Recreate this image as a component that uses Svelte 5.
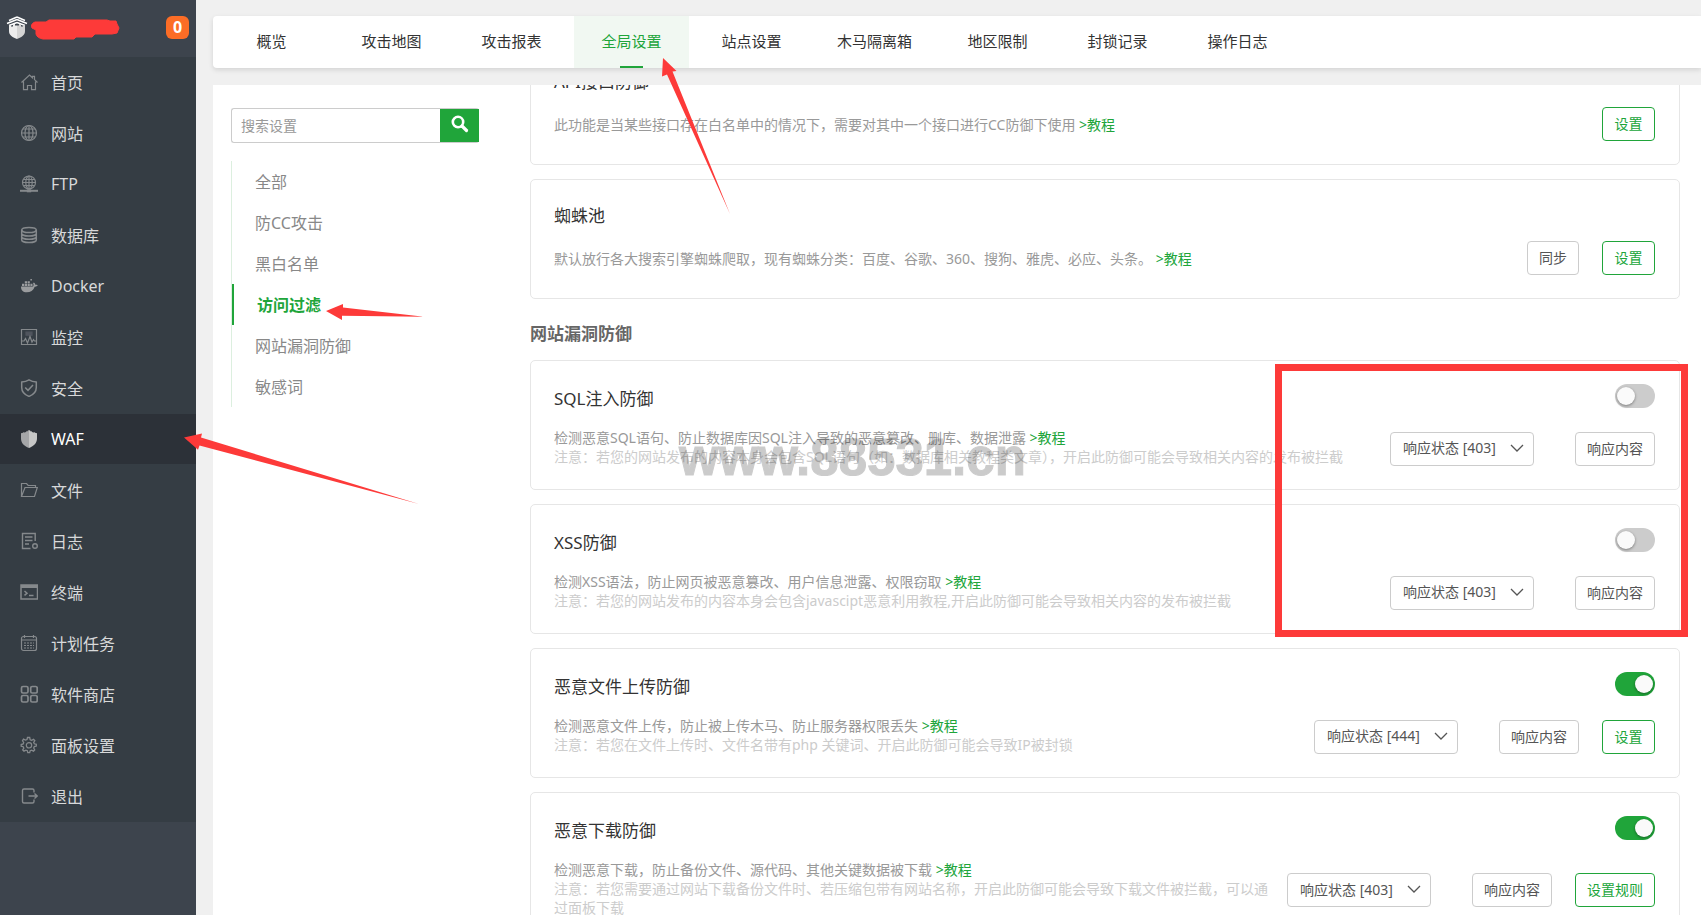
<script>
	// inner shapes of the 18x18 sidebar icons
	const menus = [
		{
			name: '首页',
			icon: '<path d="M1.5 9.5 9.5 2l3 2.8V3.3h2v3.3l3 2.9M3.5 8.5v8.2h4v-4.2h4v4.2h4V8.5"/>'
		},
		{
			name: '网站',
			icon: '<circle cx="9" cy="9" r="7.5"/><path d="M9 1.5v15M1.5 9h15M2.8 5h12.4M2.8 13h12.4"/><ellipse cx="9" cy="9" rx="4" ry="7.5"/>'
		},
		{
			name: 'FTP',
			icon: '<circle cx="9" cy="7.5" r="6.5"/><path d="M9 1v13M2.5 7.5h13M3.5 4.5h11M3.5 10.7h11"/><ellipse cx="9" cy="7.5" rx="3.2" ry="6.5"/><path d="M0 15.8h18" stroke-width="2"/><path d="M6.8 15.8h4.4" stroke-width="3"/>'
		},
		{
			name: '数据库',
			icon: '<g stroke-width="1.5"><ellipse cx="9" cy="4" rx="7.3" ry="2.6"/><path d="M1.7 4v10c0 1.4 3.3 2.6 7.3 2.6s7.3-1.2 7.3-2.6V4M1.7 7.4C1.7 8.8 5 10 9 10s7.3-1.2 7.3-2.6M1.7 10.7c0 1.4 3.3 2.6 7.3 2.6s7.3-1.2 7.3-2.6"/></g>'
		},
		{
			name: 'Docker',
			icon: '<path fill="#9a9c9e" stroke="none" d="M1 9.5h12c.7-.7.7-2.4 0-3.2l.9-.8c.9.6 1.4 1.4 1.4 2.3.9-.1 1.900 0 2.400.500-.600 1.100-1.700 1.500-3 1.400-1.400 3.600-4.100 5.600-8 5.600C3 15.300.900 13.300 1 9.500zM2 6.700h2.200v2.200H2zM4.800 6.700H7v2.200H4.800zM7.600 6.700h2.200v2.200H7.600zM10.400 6.700h2.100v2.200h-2.100zM7.600 4.200h2.200v2H7.600zM4.800 4.200H7v2H4.800zM10.400 2h1.500v1.500h-1.500z"/>'
		},
		{
			name: '监控',
			icon: '<path d="M1.5 1.5h15v15h-15z"/><path d="M6 4.2h6v3H6z" fill="#50555e" stroke="#50555e"/><path d="M2 13h2l1.5-2.5L7.5 15 10 8.5l2 5.500 1.500-2.500L14.500 13H16"/>'
		},
		{
			name: '安全',
			icon: '<path stroke-width="1.5" d="M9 .9c2.3 1.4 4.6 2 7.3 2.2v5.400c0 4.200-2.600 7.100-7.300 8.900-4.700-1.800-7.300-4.700-7.300-8.900V3.100C4.400 2.900 6.700 2.300 9 .900zM5.200 8.500 8 11.300l5-5.300"/>'
		},
		{
			name: 'WAF',
			active: true,
			icon: '<g stroke="none"><path fill="#a5a6a8" d="M9 0v18c-5-2-8-5-8-9.500V3.200l2-.4v-.6l1.400.2v.2l1.700-.5v-.8l1.300.2V1z"/><path fill="#c6c6c6" d="M9 0v18c5-2 8-5 8-9.500V3.200l-2-.4v-.6l-1.400.2v.2l-1.700-.5v-.8l-1.300.2V1z"/></g>'
		},
		{
			name: '文件',
			icon: '<path d="M1.5 15.5v-13h5l1.700 2h7.300v2M1.500 15.500h13L17.300 6.500H5z"/>'
		},
		{
			name: '日志',
			icon: '<path stroke-width="1.4" d="M15.200 9V1.500H2.500v15h8M5 5h7.500M5 8.500h7.500M5 12h4"/><circle stroke-width="1.4" cx="15" cy="14" r="2.3"/>'
		},
		{
			name: '终端',
			icon: '<path stroke-width="1.5" d="M1 2h16.500v14H1z"/><path d="M1 3.500h16.500" stroke-width="3"/><path stroke-width="1.5" d="M4.500 8 7 10.200l-2.500 2.200M9 12.500h4.500"/>'
		},
		{
			name: '计划任务',
			icon: '<rect x="1.5" y="2.5" width="15" height="14" rx="2"/><path d="M1.500 6h15M4.500 1v3M13.500 1v3"/><path d="M4 9h10M4 11.500h10M4 14h10" stroke-dasharray="2 1"/>'
		},
		{
			name: '软件商店',
			icon: '<g stroke-width="1.7"><rect x="1.5" y="1.5" width="6.5" height="6.5" rx="1.5"/><rect x="10.7" y="1.5" width="6.5" height="6.5" rx="1.5"/><rect x="1.5" y="10.500" width="6.5" height="6.5" rx="1.5"/><rect x="10.7" y="10.500" width="6.5" height="6.5" rx="1.5"/></g>'
		},
		{
			name: '面板设置',
			icon: '<path stroke-width="1.3" d="m7.500 1.500-.5 2-1.500.6-2-.9-1 1.600L3.700 6.500 3.200 8l-2 .5v1.700l2 .5.6 1.400-1.100 1.800 1.300 1.200 1.900-1 1.400.6.5 1.900h1.900l.5-1.900 1.400-.6 1.900 1 1.200-1.300-1-1.800.6-1.400 2-.5V8.300l-2-.5-.6-1.300 1.100-1.800-1.300-1.300-1.900 1-1.400-.6-.5-2.300z"/><circle cx="9" cy="9.3" r="2.7"/>'
		},
		{
			name: '退出',
			icon: '<path stroke-width="1.4" d="M14 5.500v-2q0-1.500-1.500-1.500H4Q2.500 2 2.500 3.500v11Q2.500 16 4 16h8.500q1.500 0 1.500-1.500v-2M8.500 9H17M14.500 6.500 17.300 9l-2.800 2.500"/>'
		}
	];

	const tabs = ['概览', '攻击地图', '攻击报表', '全局设置', '站点设置', '木马隔离箱', '地区限制', '封锁记录', '操作日志'];
	const categories = ['全部', '防CC攻击', '黑白名单', '访问过滤', '网站漏洞防御', '敏感词'];

	let activeTab = '全局设置';
	let activeCategory = '访问过滤';
	let keyword = '';

	const accessRules = [
		{
			title: 'API接口防御',
			desc: '此功能是当某些接口存在白名单中的情况下，需要对其中一个接口进行CC防御下使用',
			buttons: [{ text: '设置', primary: true }]
		},
		{
			title: '蜘蛛池',
			desc: '默认放行各大搜索引擎蜘蛛爬取，现有蜘蛛分类：百度、谷歌、360、搜狗、雅虎、必应、头条。',
			buttons: [{ text: '同步' }, { text: '设置', primary: true }]
		}
	];

	let holeRules = [
		{
			title: 'SQL注入防御',
			desc: '检测恶意SQL语句、防止数据库因SQL注入导致的恶意篡改、删库、数据泄露',
			note: '注意：若您的网站发布的内容本身会包含SQL语句（如：数据库相关教程类文章），开启此防御可能会导致相关内容的发布被拦截',
			status: '403',
			open: false,
			buttons: [{ text: '响应内容' }]
		},
		{
			title: 'XSS防御',
			desc: '检测XSS语法，防止网页被恶意篡改、用户信息泄露、权限窃取',
			note: '注意：若您的网站发布的内容本身会包含javascipt恶意利用教程,开启此防御可能会导致相关内容的发布被拦截',
			status: '403',
			open: false,
			buttons: [{ text: '响应内容' }]
		},
		{
			title: '恶意文件上传防御',
			desc: '检测恶意文件上传，防止被上传木马、防止服务器权限丢失',
			note: '注意：若您在文件上传时、文件名带有php 关键词、开启此防御可能会导致IP被封锁',
			status: '444',
			open: true,
			buttons: [{ text: '响应内容' }, { text: '设置', primary: true }]
		},
		{
			title: '恶意下载防御',
			desc: '检测恶意下载，防止备份文件、源代码、其他关键数据被下载',
			note: '注意：若您需要通过网站下载备份文件时、若压缩包带有网站名称，开启此防御可能会导致下载文件被拦截，可以通过面板下载',
			status: '403',
			open: true,
			buttons: [{ text: '响应内容' }, { text: '设置规则', primary: true }]
		}
	];
</script>

<div class="layout">
	<aside class="sidebar">
		<div class="server">
			<svg class="logo" viewBox="0 0 22 24" width="22" height="24" aria-hidden="true">
				<path d="M11 1 3 4.500M11 1l8 3.500M11 3.500 1 7.500M11 3.500l10 4M11 6.500 3 9.500M11 6.500l8 3" fill="none" stroke="#fff" stroke-width="1.4" />
				<path d="M3 9h2v1.500h2V8h2v1.500h2V23c-5-2-8-4-8-8z" fill="#ececec" />
				<path d="M19 9h-2v1.500h-2V8h-2v1.500h-2V23c5-2 8-4 8-8z" fill="#d4d4d4" />
			</svg>
			<svg class="scribble" viewBox="0 0 90 22" width="90" height="22" aria-hidden="true">
				<path d="M4 3h11l3-2h58l3 1h6l1 3 2 4-2 5-5 1H64l-3 3H45l-2 2H12q-6-1-7-5l0-4-4-2q-2-4 3-6z" fill="#fd3a39" stroke="#fd3a39" stroke-linejoin="round" />
			</svg>
			<span class="badge">0</span>
		</div>
		<nav>
			{#each menus as menu}
				<a href="#menu" class:active={menu.active}>
					<svg viewBox="0 0 18 18" width="18" height="18" fill="none" stroke="currentColor" stroke-width="1.2" aria-hidden="true">
						{@html menu.icon}
					</svg>
					{menu.name}
				</a>
			{/each}
		</nav>
	</aside>

	<main>
		<div class="tabs">
			{#each tabs as tab}
				<button class:active={tab === activeTab} on:click={() => (activeTab = tab)}>{tab}</button>
			{/each}
		</div>

		<div class="panel">
			<div class="filter">
				<form class="search" on:submit|preventDefault>
					<input type="text" placeholder="搜索设置" aria-label="搜索设置" bind:value={keyword} />
					<button aria-label="搜索">
						<svg viewBox="0 0 18 18" width="18" height="18" fill="none" stroke="#fff" aria-hidden="true">
							<circle cx="7" cy="7" r="5.2" stroke-width="2.6" />
							<path d="m11 11 4.500 4.500" stroke-width="3.2" stroke-linecap="round" />
						</svg>
					</button>
				</form>
				<div class="categories">
					{#each categories as item}
						<button class:active={item === activeCategory} on:click={() => (activeCategory = item)}>{item}</button>
					{/each}
				</div>
			</div>

			<div class="rules">
				{#each accessRules as rule}
					<section class="card simple">
						<div class="info">
							<h3>{rule.title}</h3>
							<p>{rule.desc} <a href="#help">&gt;教程</a></p>
						</div>
						<div class="actions">
							{#each rule.buttons as btn}
								<button class="btn" class:primary={btn.primary}>{btn.text}</button>
							{/each}
						</div>
					</section>
				{/each}

				<h2>网站漏洞防御</h2>

				{#each holeRules as rule}
					<section class="card">
						<div class="info">
							<h3>{rule.title}</h3>
							<p>{rule.desc} <a href="#help">&gt;教程</a></p>
							<p class="note">{rule.note}</p>
						</div>
						<div class="control">
							<label class="switch">
								<input type="checkbox" aria-label={rule.title} bind:checked={rule.open} />
								<span></span>
							</label>
							<div class="actions">
								<div class="select">
									<select aria-label="响应状态" bind:value={rule.status}>
										<option value="403">响应状态 [403]</option>
										<option value="444">响应状态 [444]</option>
									</select>
									<svg viewBox="0 0 14 8" width="14" height="8" fill="none" stroke="#555" stroke-width="1.3" aria-hidden="true">
										<path d="m1 1 6 6 6-6" />
									</svg>
								</div>
								{#each rule.buttons as btn}
									<button class="btn" class:primary={btn.primary}>{btn.text}</button>
								{/each}
							</div>
						</div>
					</section>
				{/each}
			</div>
		</div>
	</main>

	<div class="watermark">www.88531.cn</div>

	<!-- tutorial marks -->
	<svg class="arrows" viewBox="0 0 740 520" width="740" height="520" fill="#fd3a39" aria-hidden="true">
		<path d="M663 58 676.500 71 672.500 71.500 730 214 667 74.500 662 76.500z" />
		<path d="M326 311 343 304 343 307.500 424 316.700 342 315.700 342 320z" />
		<path d="M184 437.500 202 433.500 201 437.500 419 504 199.500 445.500 198 449.700z" />
	</svg>
	<div class="highlight"></div>
</div>

<style>
	:global(body) {
		margin: 0;
		background: #f0f0f0;
	}
	.layout {
		position: relative;
		display: flex;
		height: 100vh;
		overflow: hidden;
		font-family: 'Noto Sans', 'Noto Sans CJK SC', sans-serif;
		font-size: 14px;
		color: #333;
	}
	button,
	input,
	select {
		font-family: inherit;
		font-size: 14px;
		box-sizing: border-box;
	}
	button {
		cursor: pointer;
	}
	a {
		text-decoration: none;
	}

	.sidebar {
		flex: none;
		width: 196px;
		background: #3d444d;
	}
	.server {
		display: flex;
		align-items: center;
		height: 57px;
		box-sizing: border-box;
		padding: 0 7px 2px 6px;
	}
	.scribble {
		margin: 4px 0 0 3px;
	}
	.badge {
		width: 23px;
		margin-left: auto;
		line-height: 23px;
		border-radius: 6px;
		background: #fc6d26;
		color: #fff;
		font-size: 16px;
		font-weight: bold;
		text-align: center;
	}
	nav {
		background: #353d44;
	}
	nav a {
		display: flex;
		align-items: center;
		gap: 13px;
		height: 50px;
		padding-left: 20px;
		border-bottom: 1px solid #353d44;
		color: #d8d9da;
		font-size: 16px;
	}
	nav a.active {
		background: #2c3138;
		color: #fff;
	}
	nav svg {
		color: #85898c;
	}

	main {
		flex: 1;
		display: flex;
		flex-direction: column;
		min-width: 0;
		padding: 16px 0 0 17px;
	}
	.tabs {
		display: flex;
		flex: none;
		gap: 5px;
		height: 52px;
		margin-bottom: 17px;
		padding-left: 1px;
		border-radius: 4px 0 0 4px;
		background: #fff;
		box-shadow: 0 2px 5px rgba(0, 0, 0, 0.12);
	}
	.tabs button {
		position: relative;
		min-width: 115px;
		padding: 0 23px 4px;
		border: 0;
		background: none;
		color: #333;
		font-size: 15px;
		white-space: nowrap;
	}
	.tabs button.active {
		background: #f1f8f2;
		color: #20a53a;
	}
	.tabs button.active::after {
		content: '';
		position: absolute;
		bottom: 0;
		left: 50%;
		width: 23px;
		height: 2px;
		margin-left: -12px;
		background: #20a53a;
	}

	.panel {
		display: flex;
		flex: 1;
		min-height: 0;
		overflow: hidden;
		background: #fff;
	}
	.filter {
		flex: none;
		width: 248px;
		padding: 23px 51px 0 18px;
	}
	.search {
		display: flex;
		height: 35px;
		box-sizing: border-box;
		border: 1px solid #ccc;
		border-right: 0;
		border-radius: 3px;
	}
	.search input {
		flex: 1;
		min-width: 0;
		padding: 0 9px;
		border: 0;
		background: none;
		outline: none;
	}
	.search input::placeholder {
		color: #999;
	}
	.search button {
		width: 39px;
		padding: 0;
		border: 0;
		background: #20a53a;
	}
	.categories {
		display: flex;
		flex-direction: column;
		margin-top: 18px;
		border-left: 1px solid #dcefdf;
	}
	.categories button {
		height: 41px;
		padding: 0 0 2px 23px;
		border: 0;
		background: none;
		color: #888;
		font-size: 16px;
		text-align: left;
	}
	.categories button.active {
		border-left: 2px solid #20a53a;
		color: #20a53a;
		font-weight: bold;
	}

	/* list is scrolled down a little, the first card is cut by the panel */
	.rules {
		flex: 1;
		min-width: 0;
		margin: -40px 21px 0 0;
	}
	h2 {
		margin: 23px 0 14px;
		color: #666;
		font-size: 17px;
		line-height: 24px;
	}
	h3 {
		margin: 0 0 17px;
		font-size: 17px;
		font-weight: normal;
		line-height: 24px;
	}
	.card {
		display: flex;
		justify-content: space-between;
		gap: 16px;
		min-height: 130px;
		margin-bottom: 14px;
		padding: 0 24px 0 23px;
		box-sizing: border-box;
		border: 1px solid #e6e6e6;
		border-radius: 5px;
	}
	.info {
		padding: 26px 0 23px;
	}
	.simple {
		min-height: 120px;
	}
	.simple .info {
		padding: 24px 0;
	}
	.simple h3 {
		margin-bottom: 21px;
	}
	.simple > .actions {
		align-items: flex-start;
		padding-top: 61px;
	}
	p {
		margin: 0;
		color: #999;
		line-height: 19px;
	}
	p a {
		color: #20a53a;
	}
	.note {
		color: #ccc;
	}
	.control {
		display: flex;
		flex: none;
		flex-direction: column;
		align-items: flex-end;
		padding-top: 23px;
	}
	.control .actions {
		flex: 1;
	}
	.actions {
		display: flex;
		flex: none;
		align-items: center;
		gap: 23px;
	}
	.btn {
		height: 34px;
		padding: 0 11px 2px;
		border: 1px solid #ccc;
		border-radius: 4px;
		background: #fff;
		color: #555;
	}
	.btn.primary {
		min-width: 53px;
		border-color: #20a53a;
		color: #20a53a;
	}
	.select {
		position: relative;
		margin-right: 18px;
	}
	.select select {
		display: block;
		width: 144px;
		height: 34px;
		padding: 0 12px 2px;
		border: 1px solid #ccc;
		border-radius: 4px;
		background: #fff;
		color: #555;
		appearance: none;
	}
	.select svg {
		position: absolute;
		top: 12px;
		right: 10px;
		pointer-events: none;
	}
	.switch {
		position: relative;
		width: 40px;
		height: 24px;
	}
	.switch input {
		position: absolute;
		inset: 0;
		margin: 0;
		opacity: 0;
	}
	.switch span {
		display: block;
		height: 24px;
		border-radius: 12px;
		background: #ccc;
		pointer-events: none;
	}
	.switch span::after {
		content: '';
		position: absolute;
		top: 3px;
		left: 2px;
		width: 18px;
		height: 18px;
		border-radius: 50%;
		background: #fafafa;
		box-shadow: 0 1px 3px rgba(0, 0, 0, 0.4);
	}
	.switch input:checked + span {
		background: #20a53a;
	}
	.switch input:checked + span::after {
		left: 20px;
	}

	.watermark {
		position: absolute;
		top: 429px;
		left: 679px;
		color: #000;
		font: bold 51px/58px 'Liberation Sans', sans-serif;
		-webkit-text-stroke: 1px #000;
		opacity: 0.2;
		pointer-events: none;
	}
	.arrows {
		position: absolute;
		top: 0;
		left: 0;
		pointer-events: none;
	}
	.highlight {
		position: absolute;
		top: 364px;
		right: 13px;
		width: 413px;
		height: 273px;
		box-sizing: border-box;
		border: 7px solid #fd3a39;
		pointer-events: none;
	}
</style>
